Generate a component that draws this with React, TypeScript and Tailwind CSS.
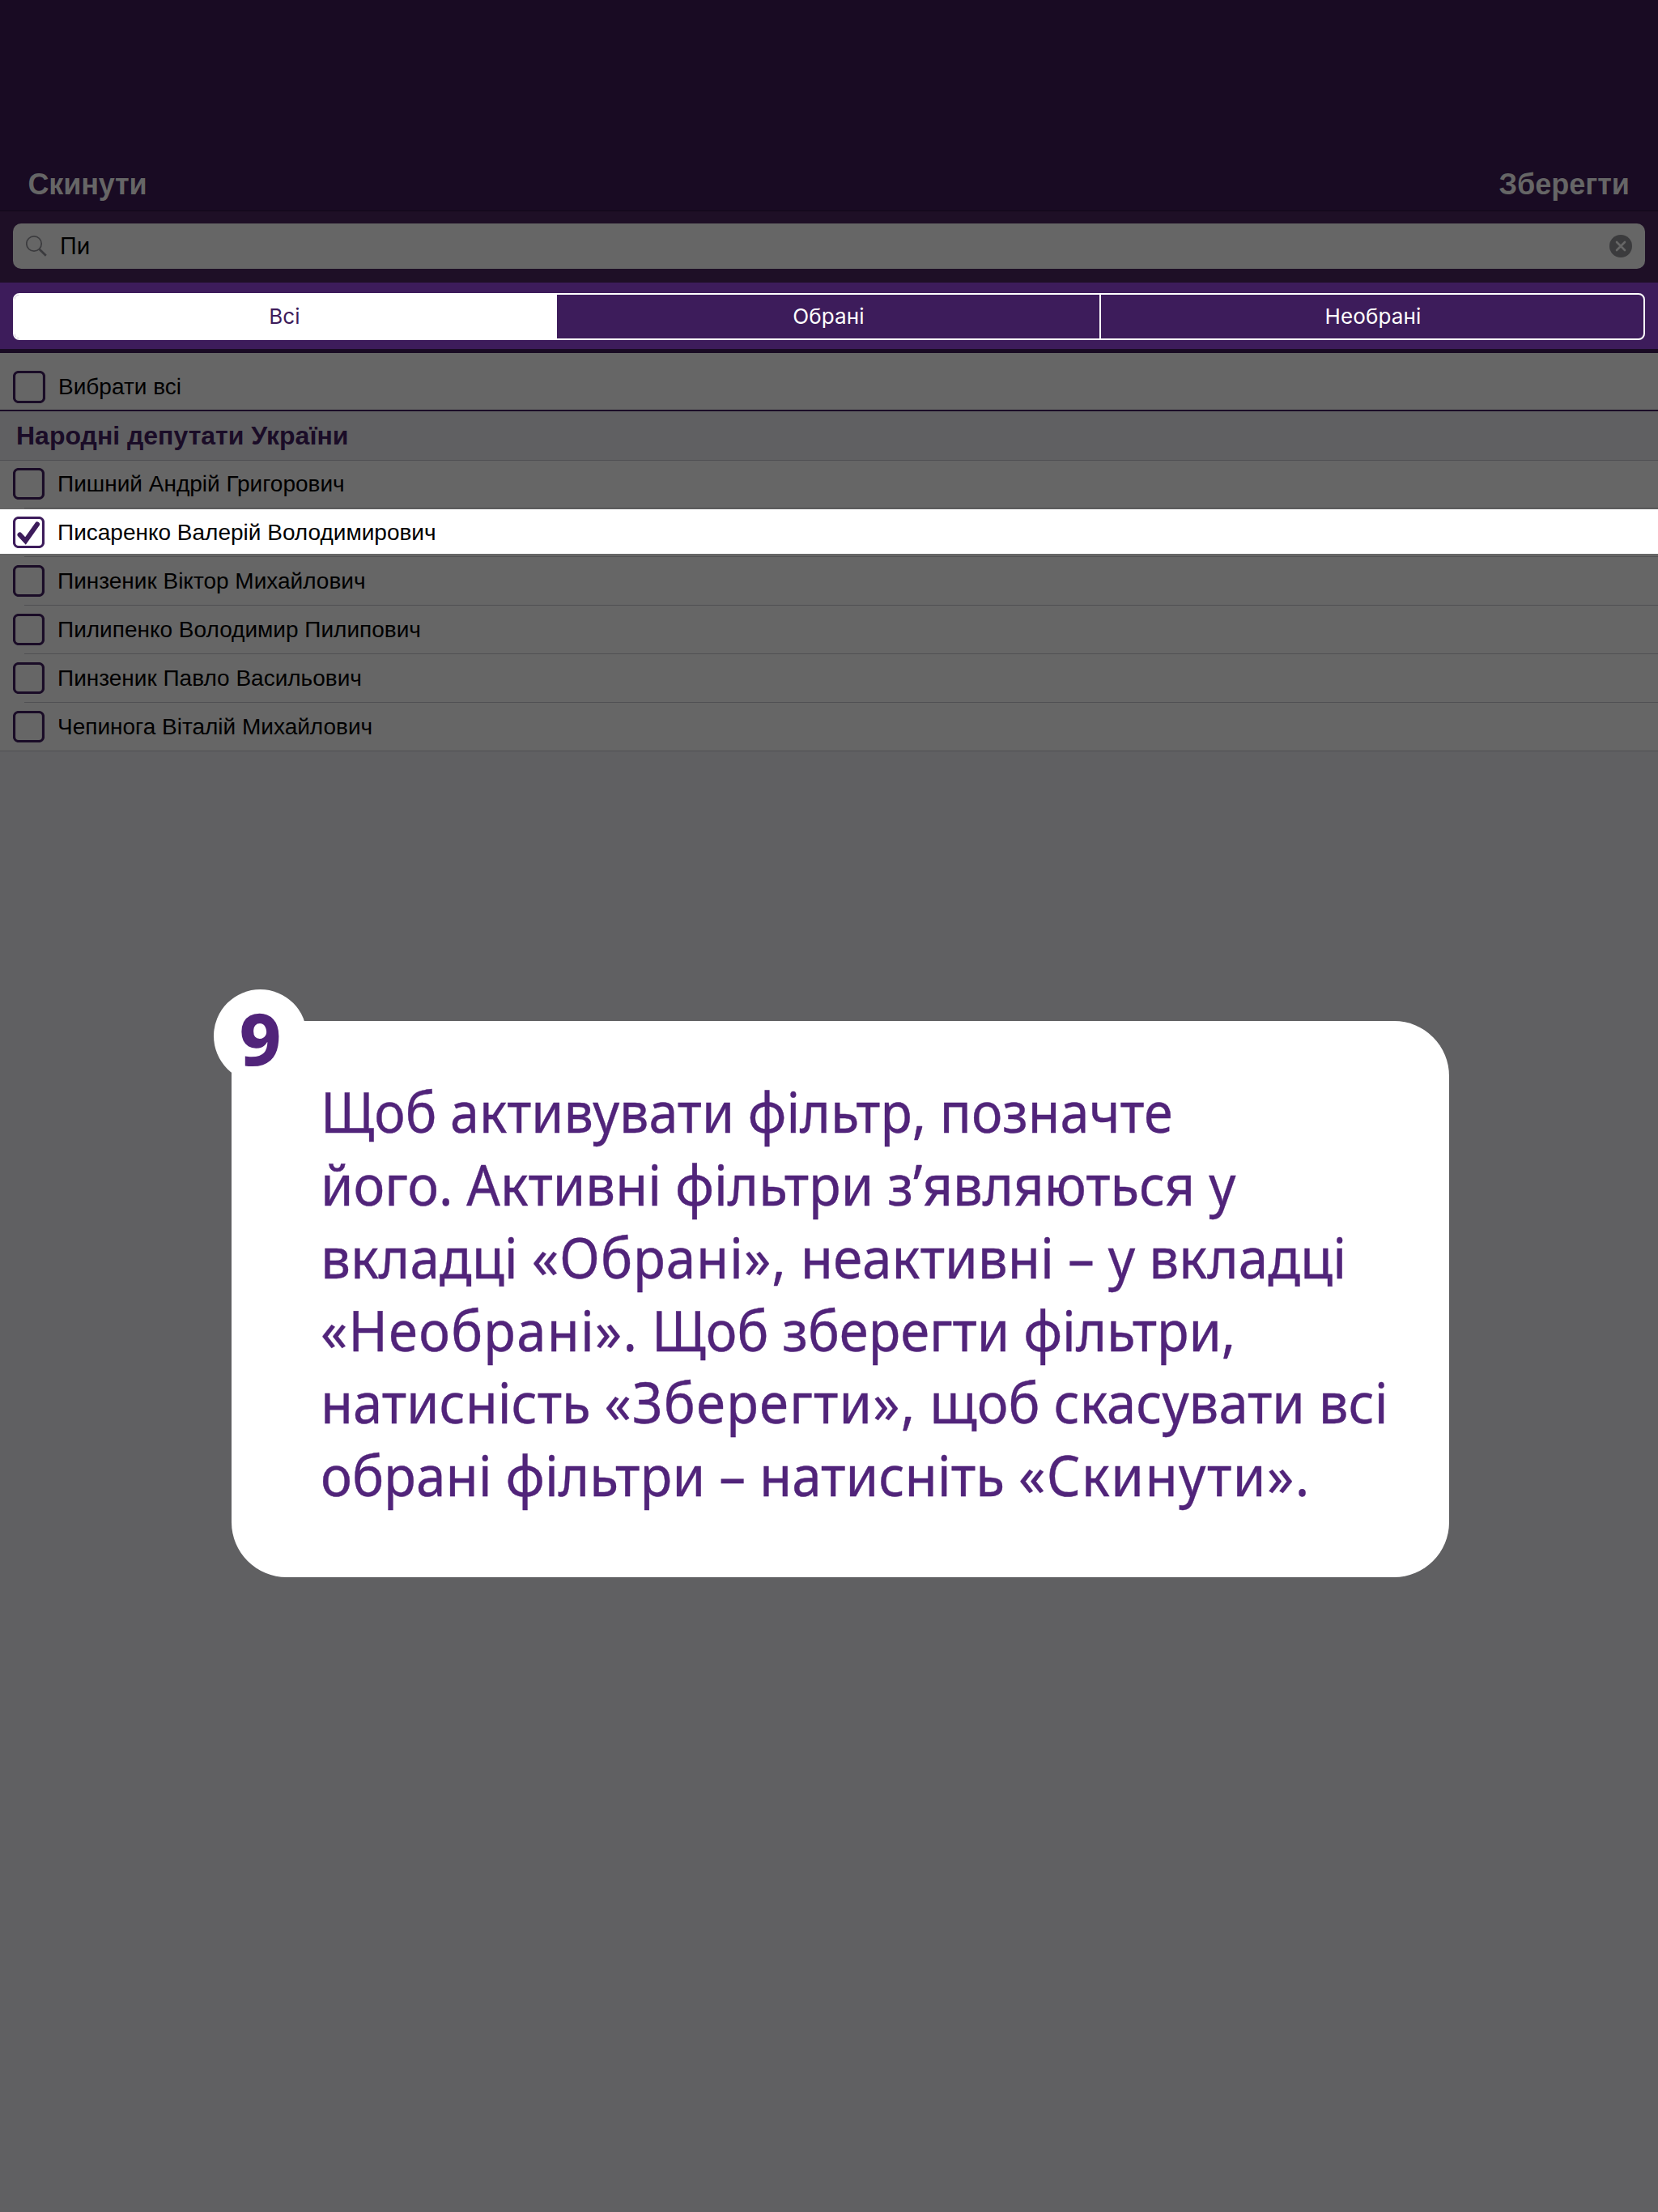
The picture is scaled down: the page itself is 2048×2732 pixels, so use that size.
import React from 'react';

function Checkbox({ checked = false, dim = true, tall = false }: { checked?: boolean; dim?: boolean; tall?: boolean }) {
  const color = dim ? '#1a0c27' : '#3d1c5b';
  const s = tall ? 40 : 39;
  return (
    <svg width={s} height={s} viewBox={`0 0 ${s} ${s}`} className="shrink-0" fill="none">
      <rect x="1.5" y="1.5" width={s - 3} height={s - 3} rx="5.5" stroke={color} strokeWidth="3.2" />
      {checked && (
        <path d="M8.5 22.5 L15.5 30 L30 9.5" stroke={color} strokeWidth="6" strokeLinecap="round" strokeLinejoin="miter" />
      )}
    </svg>
  );
}

function Row({ name, checked = false, last = false }: { name: string; checked?: boolean; last?: boolean }) {
  return (
    <div>
      <div
        className={
          checked
            ? 'flex h-[55px] items-start bg-white pl-4 pt-[9px] mb-[3px]'
            : 'flex h-[59px] items-start pl-4 pt-[10px]'
        }
      >
        <Checkbox checked={checked} dim={!checked} />
        <span className="ml-4 text-[28px] leading-[39px] text-black">{name}</span>
      </div>
      <div className={last ? 'h-px bg-[#505053]' : 'ml-[30px] h-px bg-[#505053]'} />
    </div>
  );
}

const deputies = [
  { name: 'Писаренко Валерій Володимирович', checked: true },
  { name: 'Пинзеник Віктор Михайлович' },
  { name: 'Пилипенко Володимир Пилипович' },
  { name: 'Пинзеник Павло Васильович' },
  { name: 'Чепинога Віталій Михайлович', last: true },
];

export default function App() {
  return (
    <div className="relative h-[2732px] w-[2048px] overflow-hidden bg-[#606062] font-['Liberation_Sans',Arial,sans-serif]">
      <header className="flex h-[260px] items-end justify-between bg-[#190b23] pb-3 pl-[34.5px] pr-[35px] text-[36px] font-bold leading-[41px] text-[#666666]">
        <span className="tracking-[-0.15px]">Скинути</span>
        <span>Зберегти</span>
      </header>

      <div className="h-[89px] border-t border-[#110718] bg-[#1e0f26] px-4 pt-[15px]">
        <div className="flex h-[56px] items-center rounded-[10px] bg-[#666666] px-4">
          <svg width="28" height="28" viewBox="0 0 28 28" fill="none" stroke="#3b3b3e">
            <circle cx="10" cy="11" r="9.2" strokeWidth="1.7" />
            <path d="M16.6 17.8 L24.8 25.8" strokeWidth="2.7" />
          </svg>
          <span className="ml-[14px] grow font-['Inter',sans-serif] text-[28px] leading-9 text-black">Пи</span>
          <svg width="28" height="28" viewBox="0 0 28 28" fill="none">
            <circle cx="14" cy="14" r="14" fill="#3b3b3d" />
            <path d="M9 9 L19 19 M19 9 L9 19" stroke="#666666" strokeWidth="2.6" strokeLinecap="round" />
          </svg>
        </div>
      </div>

      <div className="h-[82px] bg-[#3d1c5b] px-4 pt-[13px]">
        <div className="flex h-[58px] overflow-hidden rounded-lg border-2 border-white font-['Inter',sans-serif] text-[26px] leading-[54px] tracking-[0.15px] text-white">
          <div className="w-[670px] bg-white pr-[3px] text-center text-[#3d1c5b]">Всі</div>
          <div className="w-[672px] border-r-2 border-white pl-px text-center">Обрані</div>
          <div className="grow pl-0.5 text-center">Необрані</div>
        </div>
      </div>
      <div className="h-[5px] bg-[#190b23]" />

      <div className="bg-[#666666]">
        <div className="flex h-[72px] items-start border-b-2 border-[#1a0c27] pl-4 pt-[22px]">
          <Checkbox tall />
          <span className="ml-4 text-[28px] leading-[40px]">Вибрати всі</span>
        </div>
        <div className="h-[60px] bg-[#606062] pl-5 text-[32px] font-bold leading-[60px] text-[#1a0c27]">
          Народні депутати України
        </div>
        <div className="h-px bg-[#505053]" />
        <div className="flex h-[58px] items-start pl-4 pt-[9px]">
          <Checkbox />
          <span className="ml-4 text-[28px] leading-[39px]">Пишний Андрій Григорович</span>
        </div>
        <div className="mb-px ml-[30px] h-px bg-[#505053]" />
        {deputies.map((d) => (
          <Row key={d.name} {...d} />
        ))}
      </div>

      <div className="absolute left-[264px] top-[1222px] size-[115px] rounded-full bg-white" />
      <section className="absolute left-[286px] top-[1261px] h-[687px] w-[1504px] rounded-[68px] rounded-tl-none bg-white pl-[110px] pt-[67px] font-['Noto_Sans',sans-serif] text-[70px] leading-[89.85px] text-[#51247a]">
        <p className="whitespace-nowrap [-webkit-text-stroke:0.4px_#51247a]">
          <span className="block origin-left scale-x-[0.923]">Щоб активувати фільтр, позначте</span>
          <span className="block origin-left scale-x-[0.9316]">його. Активні фільтри з’являються у</span>
          <span className="block origin-left scale-x-[0.9375]">
            вкладці <span className="tracking-[0.9px]">«Обрані»,</span> неактивні – у вкладці
          </span>
          <span className="block origin-left scale-x-[0.9295]">
            <span className="tracking-[1.4px]">«Необрані».</span> Щоб зберегти фільтри,
          </span>
          <span className="block origin-left scale-x-[0.9319]">
            натисність <span className="tracking-[1.3px]">«Зберегти»,</span> щоб скасувати всі
          </span>
          <span className="block origin-left scale-x-[0.9365]">
            обрані фільтри – натисніть <span className="tracking-[1.5px]">«Скинути».</span>
          </span>
        </p>
      </section>
      <span className="absolute left-[295.5px] top-[1224px] font-['Noto_Sans',sans-serif] text-[90px] font-extrabold leading-[115px] text-[#51247a]">9</span>
    </div>
  );
}
